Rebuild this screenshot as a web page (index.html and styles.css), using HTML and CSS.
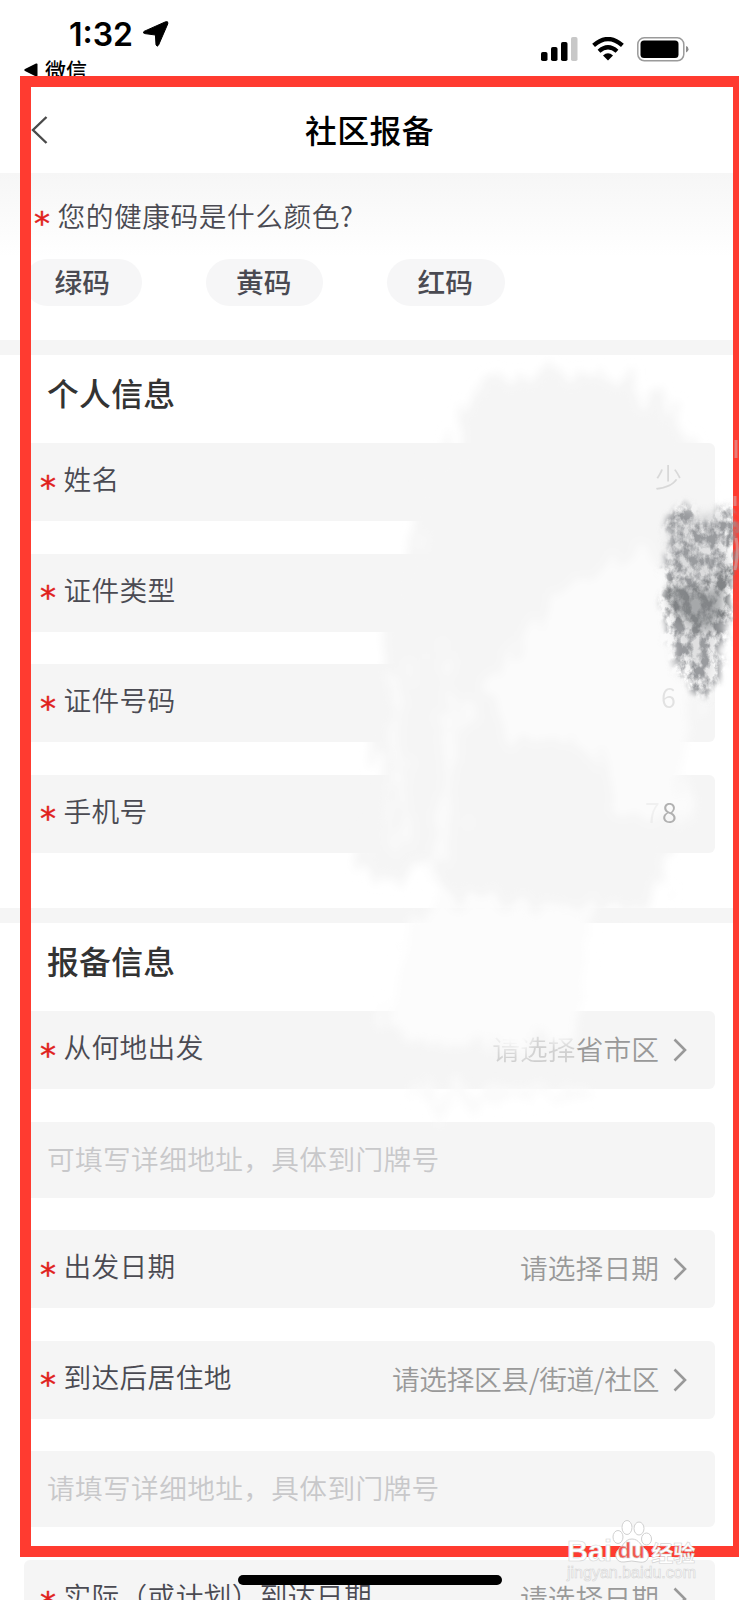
FILE: index.html
```html
<!DOCTYPE html>
<html lang="zh-CN">
<head>
    <meta charset="UTF-8">
    <meta name="viewport" content="width=device-width, initial-scale=1.0">
    <title>社区报备</title>
    <link rel="stylesheet" href="styles.css">
</head>
<body>
    <div class="screen">
        <div class="status-bar">
            <div class="status-left">
                <div class="clock">
                    <span class="time">1:32</span>
                    <svg width="26" height="26" viewBox="0 0 26 26"><path d="M1 10.400 22.500.8Q25.600 0 24.800 2.800L15.600 24Q14 26.500 13 23.800L12.400 14 1.800 12.600Q-.8 11.800 1 10.400Z" fill="#000" stroke="#000"/></svg>
                </div>
                <div class="back-app">
                    <svg width="14" height="14" viewBox="0 0 14 14"><path d="M1 6 12 .5Q13.500 0 13.500 1.500V12.500Q13.500 14 12 13.500L1 8Q-.5 7 1 6Z" fill="#000"/></svg>
                    <span>微信</span>
                </div>
            </div>
            <div class="status-right">
                <svg class="signal" width="38" height="25" viewBox="0 0 38 25">
                    <rect x="0" y="15" width="6.500" height="9" rx="1.800"/>
                    <rect x="10" y="10" width="6.500" height="14" rx="1.800"/>
                    <rect x="20" y="5" width="6.500" height="19" rx="1.800"/>
                    <rect x="30" y="0" width="6.500" height="24" rx="1.800" fill="#c8c8c8"/>
                </svg>
                <svg class="wifi" width="32" height="24" viewBox="0 0 32 24" fill="none" stroke="#000" stroke-width="4.200">
                    <path d="M1.600 8.400Q16-4.400 30.400 8.400"/>
                    <path d="M7 14.200Q16 6.200 25 14.200"/>
                    <path d="M11 18.400Q16 14.200 21 18.400L16 23.600Z" fill="#000" stroke="none"/>
                </svg>
                <svg class="battery" width="52" height="25" viewBox="0 0 52 25">
                    <rect x=".8" y=".8" width="46" height="23" rx="6.500" fill="#fff" stroke="#9a9a9a" stroke-width="1.500"/>
                    <rect x="3.500" y="3.500" width="38" height="17.500" rx="3.500"/>
                    <path d="M49 9Q51.500 9.500 51.500 12.300T49 15.600Z" fill="#8c8c8c"/>
                </svg>
            </div>
        </div>

        <header class="nav-bar">
            <svg class="nav-back" width="18" height="28" viewBox="0 0 18 28"><path d="M15.500 1 2 14 15.500 27" fill="none" stroke="#4a4a4a" stroke-width="2.400"/></svg>
            <h1 class="nav-title">社区报备</h1>
        </header>

        <section class="health">
            <div class="question"><span class="star">*</span>您的健康码是什么颜色?</div>
            <div class="pills">
                <span class="pill">绿码</span>
                <span class="pill">黄码</span>
                <span class="pill">红码</span>
            </div>
        </section>

        <section class="group">
            <h2 class="group-title">个人信息</h2>
            <div class="field"><span class="star">*</span><span class="label">姓名</span></div>
            <div class="field"><span class="star">*</span><span class="label">证件类型</span></div>
            <div class="field"><span class="star">*</span><span class="label">证件号码</span></div>
            <div class="field"><span class="star">*</span><span class="label">手机号</span></div>
        </section>

        <section class="group report">
            <h2 class="group-title">报备信息</h2>
            <div class="field">
                <span class="star">*</span><span class="label">从何地出发</span>
                <span class="value"><span class="faded">请选择</span>省市区</span>
                <svg class="chevron" width="14" height="24" viewBox="0 0 14 24"><path d="M1.500 1.500 12 12 1.500 22.500"/></svg>
            </div>
            <div class="field input">可填写详细地址，具体到门牌号</div>
            <div class="field">
                <span class="star">*</span><span class="label">出发日期</span>
                <span class="value">请选择日期</span>
                <svg class="chevron" width="14" height="24" viewBox="0 0 14 24"><path d="M1.500 1.500 12 12 1.500 22.500"/></svg>
            </div>
            <div class="field">
                <span class="star">*</span><span class="label">到达后居住地</span>
                <span class="value region">请选择区县/街道/社区</span>
                <svg class="chevron" width="14" height="24" viewBox="0 0 14 24"><path d="M1.500 1.500 12 12 1.500 22.500"/></svg>
            </div>
            <div class="field input">请填写详细地址，具体到门牌号</div>
            <div class="field">
                <span class="star">*</span><span class="label">实际（或计划）到达日期</span>
                <span class="value">请选择日期</span>
                <svg class="chevron" width="14" height="24" viewBox="0 0 14 24"><path d="M1.500 1.500 12 12 1.500 22.500"/></svg>
            </div>
        </section>

        <div class="home-indicator"></div>
        <div class="frame"></div>

        <!-- eraser strokes over the private values -->
        <svg class="smudge" width="739" height="1600" viewBox="0 0 739 1600">
            <defs>
                <filter id="rough" x="-10%" y="-10%" width="120%" height="120%">
                    <feTurbulence type="fractalNoise" baseFrequency="0.06 0.02" numOctaves="4" seed="4" result="n"/>
                    <feDisplacementMap in="SourceGraphic" in2="n" scale="50" xChannelSelector="R" yChannelSelector="G"/>
                    <feGaussianBlur stdDeviation="5"/>
                </filter>
                <filter id="chalk" x="-30%" y="-15%" width="160%" height="130%">
                    <feTurbulence type="fractalNoise" baseFrequency="0.12 0.09" numOctaves="5" seed="9" result="n"/>
                    <feDisplacementMap in="SourceGraphic" in2="n" scale="26" xChannelSelector="R" yChannelSelector="G" result="d"/>
                    <feGaussianBlur in="d" stdDeviation="3" result="b"/>
                    <feColorMatrix in="n" type="matrix" values="0 0 0 0 0  0 0 0 0 0  0 0 0 0 0  0 0 3.200 0 -1.100" result="m"/>
                    <feComposite in="b" in2="m" operator="in"/>
                </filter>
                <filter id="soft" x="-30%" y="-30%" width="160%" height="160%">
                    <feGaussianBlur stdDeviation="5"/>
                </filter>
            </defs>
            <g filter="url(#rough)">
                <path d="M482 376 560 370 625 380 672 410 692 440 698 520 690 600 684 660 676 740 674 840 656 905 600 910 450 896 436 862 408 884 365 872 378 760 382 670 408 560 424 470 455 440Z" fill="#f5f5f5"/>
                <path d="M560 585 650 550 690 580 708 640 700 690 690 750 685 820 612 815 600 750 510 735 482 690 530 630Z" fill="#fbfbfb"/>
                <path d="M392 670 402 670 400 850 392 850ZM440 640 448 640 446 690 468 700 460 750 452 840 436 890 430 860 446 740Z" fill="#fafafa"/>
                <path d="M436 900 590 908 584 1000 570 1035 520 1050 420 1040 382 1020 390 970 420 920Z" fill="#fcfcfc"/>
                <path d="M410 1092 590 1086 580 1100 520 1098 436 1108Z" fill="#fafafa"/>
            </g>
            <g filter="url(#chalk)">
                <path d="M668 512 690 506 702 526 716 516 736 502 735 560 728 620 716 684 706 700 692 690 676 670 664 620Z" fill="#96989b"/>
                <path d="M664 580 700 586 720 580 735 530 728 610 714 638 690 630 666 612Z" fill="#77797c"/>
            </g>
            <path d="M670 584 700 592 716 590 728 550 722 612 710 632 690 624 670 608Z" fill="#777a7d" opacity=".6" filter="url(#soft)"/>
            <path d="M668 520 728 510 722 620 706 690 676 640Z" fill="#a0a2a5" opacity=".3" filter="url(#soft)"/>
            <g class="ghost">
                <text x="655" y="488" opacity=".3">少</text>
                <text x="661" y="708" opacity=".25">6</text>
                <text x="645" y="823" opacity=".1">7</text>
                <text x="662" y="823" opacity=".75">8</text>
            </g>
            <path d="M736 440v18M735 496v10M736 538q3 12-1 32" stroke="#d8a8a8" stroke-width="3" opacity=".6" fill="none"/>
        </svg>

        <div class="watermark">
            <svg class="paw" width="40" height="44" viewBox="0 0 40 44" fill="#fff" stroke="#d0d0d0" stroke-width="1">
                <ellipse cx="6" cy="17" rx="5" ry="6.500"/>
                <ellipse cx="15" cy="7.500" rx="5" ry="7"/>
                <ellipse cx="27" cy="8.500" rx="5" ry="6.500"/>
                <ellipse cx="34.500" cy="19" rx="5" ry="6"/>
                <path d="M20 19C13 19 11 26 7 29C1 34 4 43 12 42Q20 40 27 42C37 44 39 34 33 29C29 26 27 19 20 19Z"/>
            </svg>
            <div class="brand"><span>Bai</span><span class="du">du</span><span class="cn">经验</span></div>
            <div class="site">jingyan.baidu.com</div>
        </div>
    </div>
</body>
</html>
```

FILE: styles.css
```css
:root {
    --field-bg: #f5f5f5;
    --text-color: #4a4a52;
    --star-color: #e0201c;
    --frame-color: #ff3b30;
}

* {
    margin: 0;
    padding: 0;
    box-sizing: border-box;
}

body {
    background: #fff;
    color: var(--text-color);
    font-family: 'Noto Sans CJK SC', sans-serif;
    font-size: 27.7px;
    font-weight: 350;
    letter-spacing: 0.35px;
    overflow: hidden;
}

svg {
    display: block;
    flex: none;
}

.screen {
    position: relative;
    width: 739px;
    height: 1600px;
    overflow: hidden;
}

.status-bar {
    display: flex;
    justify-content: space-between;
    height: 87px;
    padding: 15px 50px 0 24px;
    color: #000;
}

.clock {
    display: flex;
    align-items: center;
    gap: 10px;
    height: 38px;
    padding-left: 45px;
}

.time {
    font-family: Inter, sans-serif;
    font-size: 32px;
    font-weight: 600;
    line-height: 38px;
    letter-spacing: 0;
    padding-top: 1px;
}

.back-app {
    display: flex;
    align-items: center;
    gap: 7px;
    height: 34px;
    font-size: 21px;
    font-weight: 500;
    line-height: 34px;
    letter-spacing: 0;
}

.back-app span {
    padding-bottom: 2px;
}

.status-right {
    display: flex;
    gap: 13px;
    padding-top: 22px;
}

.nav-bar {
    display: flex;
    align-items: center;
    height: 86px;
    padding: 0 31px 1px;
}

.nav-back {
    margin-right: -18px;
}

.nav-title {
    flex: 1;
    padding-bottom: 2px;
    color: #000;
    font-size: 31.8px;
    font-weight: 500;
    line-height: 46px;
    letter-spacing: 0.5px;
    text-align: center;
}

.health {
    height: 182px;
    padding: 20px 24px 0;
    background: linear-gradient(#f6f6f6, #fff 84px);
    border-bottom: 15px solid #f5f5f5;
}

.star {
    flex: none;
    width: 23.5px;
    color: var(--star-color);
    font-family: 'DejaVu Sans', sans-serif;
    font-size: 32px;
    font-weight: 400;
    line-height: 40px;
    -webkit-text-stroke: 0.4px var(--star-color);
}

.question {
    display: flex;
    align-items: center;
    height: 44px;
    padding-left: 10px;
    letter-spacing: 0.55px;
}

.question .star {
    padding-top: 15px;
}

.pills {
    display: flex;
    gap: 64px;
    margin-top: 22px;
}

.pill {
    width: 117.5px;
    height: 47px;
    border-radius: 24px;
    background: #f6f6f7;
    font-weight: 500;
    line-height: 45px;
    letter-spacing: 0;
    padding-right: 1px;
    text-align: center;
}

.group {
    display: flex;
    flex-direction: column;
    gap: 32.4px;
    height: 568px;
    padding: 15px 24px 0;
    border-bottom: 15px solid #f5f5f5;
}

.group-title {
    height: 46px;
    margin-bottom: -5.4px;
    padding-left: 23px;
    color: #333;
    font-size: 31.8px;
    font-weight: 500;
    line-height: 45px;
    letter-spacing: 0.3px;
}

.field {
    display: flex;
    flex: none;
    align-items: center;
    height: 78.2px;
    padding: 0 28px 0 16px;
    border-radius: 6px;
    background: var(--field-bg);
}

.field .star {
    padding-top: 9px;
}

.label {
    padding-bottom: 8px;
}

.value {
    margin-left: auto;
    padding-bottom: 4px;
    color: #999;
    letter-spacing: 0.1px;
}

.region {
    letter-spacing: -0.35px;
}

.faded {
    opacity: 0.4;
}

.chevron {
    margin-left: 14px;
    fill: none;
    stroke: #999;
    stroke-width: 2.6;
}

.report {
    height: auto;
    border-bottom: 0;
}

.input {
    height: 76px;
    padding-left: 23px;
    padding-bottom: 4px;
    color: #c8c8ca;
}

/* overlays */
.home-indicator {
    position: absolute;
    left: 238px;
    top: 1575px;
    width: 264px;
    height: 10px;
    border-radius: 5px;
    background: #000;
}

.frame {
    position: absolute;
    left: 20px;
    top: 76px;
    width: 725px;
    height: 1481px;
    border: 11px solid var(--frame-color);
    border-right-width: 12px;
}

.smudge {
    position: absolute;
    left: 0;
    top: 0;
}

.ghost {
    fill: #999;
    font-size: 27px;
}

.watermark {
    position: absolute;
    left: 567px;
    top: 1520px;
    width: 134px;
    color: #fff;
    letter-spacing: 0;
    -webkit-text-stroke: 0.6px #d4d4d4;
}

.paw {
    position: absolute;
    left: 45px;
    top: 0;
}

.brand {
    position: relative;
    display: flex;
    align-items: center;
    height: 42px;
    padding-top: 20px;
    font-family: 'Liberation Sans', sans-serif;
    font-size: 29px;
    font-weight: bold;
    line-height: 24px;
}

.du {
    width: 38px;
    color: #f5564c;
    font-size: 22px;
    text-align: center;
}

.cn {
    margin-left: 1px;
    font-family: 'Noto Sans CJK SC', sans-serif;
    font-size: 22px;
}

.site {
    font-family: 'Liberation Sans', sans-serif;
    font-size: 16px;
    font-weight: 400;
    line-height: 22px;
}
```
